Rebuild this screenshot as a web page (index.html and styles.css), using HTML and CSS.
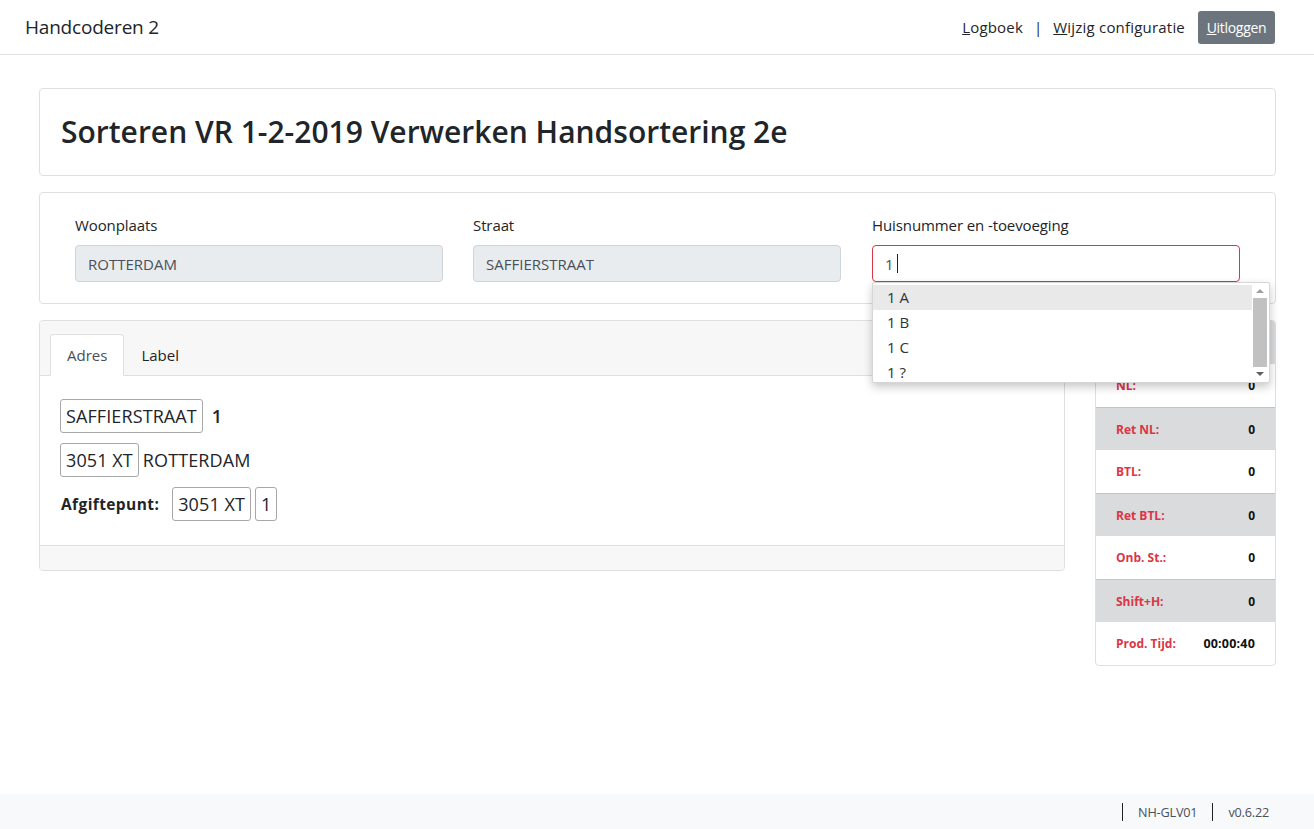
FILE: index.html
```html
<!DOCTYPE html>
<html lang="nl">
<head>
<meta charset="utf-8">
<title>Handcoderen 2</title>
<link rel="stylesheet" href="styles.css">
</head>
<body>
<div class="page">
  <header class="navbar">
    <div class="brand">Handcoderen 2</div>
    <nav class="nav-right">
      <a class="nav-link"><u>L</u>ogboek</a>
      <span class="sep">|</span>
      <a class="nav-link"><u>W</u>ijzig configuratie</a>
      <button class="btn-logout"><u>U</u>itloggen</button>
    </nav>
  </header>

  <main class="container">
    <section class="card title-card">
      <h1>Sorteren VR 1-2-2019 Verwerken Handsortering 2e</h1>
    </section>

    <section class="card form-card">
      <div class="field">
        <label>Woonplaats</label>
        <div class="input disabled">ROTTERDAM</div>
      </div>
      <div class="field">
        <label>Straat</label>
        <div class="input disabled">SAFFIERSTRAAT</div>
      </div>
      <div class="field field-house">
        <label>Huisnummer en -toevoeging</label>
        <div class="input invalid">1 <span class="caret"></span></div>
        <div class="dropdown">
          <ul class="options">
            <li class="active">1 A</li>
            <li>1 B</li>
            <li>1 C</li>
            <li>1 ?</li>
          </ul>
          <div class="scrollbar">
            <span class="arrow up"></span>
            <span class="thumb"></span>
            <span class="arrow down"></span>
          </div>
        </div>
      </div>
    </section>

    <div class="lower">
      <section class="card tabs-card">
        <div class="tabs-header">
          <div class="tab active">Adres</div>
          <div class="tab">Label</div>
        </div>
        <div class="tabs-body">
          <div class="addr-line"><span class="box">SAFFIERSTRAAT</span><span class="plain num">1</span></div>
          <div class="addr-line"><span class="box">3051 XT</span><span class="plain">ROTTERDAM</span></div>
          <div class="addr-line"><strong class="afg">Afgiftepunt:</strong><span class="box">3051 XT</span><span class="box">1</span></div>
        </div>
        <div class="tabs-footer"></div>
      </section>

      <aside class="card stats-card">
        <div class="stat-row gray head"></div>
        <div class="stat-row"><span class="lbl">NL:</span><span class="val">0</span></div>
        <div class="stat-row gray"><span class="lbl">Ret NL:</span><span class="val">0</span></div>
        <div class="stat-row"><span class="lbl">BTL:</span><span class="val">0</span></div>
        <div class="stat-row gray"><span class="lbl">Ret BTL:</span><span class="val">0</span></div>
        <div class="stat-row"><span class="lbl">Onb. St.:</span><span class="val">0</span></div>
        <div class="stat-row gray"><span class="lbl">Shift+H:</span><span class="val">0</span></div>
        <div class="stat-row"><span class="lbl">Prod. Tijd:</span><span class="val wide">00:00:40</span></div>
      </aside>
    </div>
  </main>

  <footer class="footer">
    <span class="foot-item">NH-GLV01</span>
    <span class="foot-item">v0.6.22</span>
  </footer>
</div>
</body>
</html>
```

FILE: styles.css
```css
* { box-sizing: border-box; }
html, body { margin: 0; padding: 0; }
body {
  font-family: "Open Sans", "Noto Sans", "Liberation Sans", sans-serif;
  color: #212529;
  font-size: 15px;
  background: #fff;
}
.page {
  height: 829px;
  display: flex;
  flex-direction: column;
}
.navbar {
  height: 55px;
  border-bottom: 1px solid #dee2e6;
  display: flex;
  align-items: center;
  justify-content: space-between;
  padding: 0 39px 0 25px;
}
.brand { font-size: 19px; letter-spacing: -0.2px; }
.nav-right { display: flex; align-items: center; }
.nav-link { color: #212529; font-size: 15px; letter-spacing: 0.2px; }
.sep { margin: 0 11px 0 11px; font-size: 15px; color: #212529; }
.btn-logout {
  margin-left: 13px;
  background: #6c757d;
  color: #fff;
  border: none;
  border-radius: 3px;
  height: 33px;
  width: 77px;
  font-family: inherit;
  font-size: 14px;
  letter-spacing: -0.3px;
  padding: 0;
}
.container {
  flex: 1;
  padding: 33px 38px 0 39px;
}
.card {
  border: 1px solid #dfdfdf;
  border-radius: 4px;
  background: #fff;
}
.title-card {
  height: 88px;
  display: flex;
  align-items: center;
  padding: 0 21px;
  margin-bottom: 16px;
}
.title-card h1 {
  margin: 0;
  font-size: 30px;
  font-weight: 600;
  letter-spacing: 0px;
  padding-bottom: 2px;
}
.form-card {
  height: 112px;
  display: grid;
  grid-template-columns: repeat(3, 368px);
  column-gap: 30px;
  padding: 22px 35px 0 35px;
  margin-bottom: 16px;
}
.field { position: relative; }
.field-house { left: 1px; }
.field label { display: block; font-size: 15px; margin-bottom: 10px; line-height: 20px; letter-spacing: -0.1px; }
.input {
  height: 37px;
  border: 1px solid #ced4da;
  border-radius: 4px;
  padding: 0 12px;
  display: flex;
  align-items: center;
  font-size: 15px;
  color: #495057;
}
.input.disabled { background: #e9ecef; }
.input.invalid { border-color: #dc3545; }
.caret { display: inline-block; width: 1px; height: 19px; background: #222; margin-left: 3px; }
.dropdown {
  position: absolute;
  left: 0;
  top: 67px;
  width: 398px;
  height: 101px;
  background: #fff;
  border: 1px solid #d6d6d6;
  border-radius: 2px;
  box-shadow: 0 4px 10px rgba(0,0,0,0.22);
  display: flex;
  z-index: 10;
}
.options {
  list-style: none;
  margin: 0;
  padding: 2px 0 0 0;
  flex: 1;
  overflow: hidden;
}
.options li {
  height: 25px;
  line-height: 25px;
  padding-left: 14px;
  font-size: 15px;
  color: #333;
}
.options li.active { background: #e9e9e9; }
.scrollbar {
  width: 16px;
  display: flex;
  flex-direction: column;
  align-items: center;
  margin-right: 1px;
}
.arrow { width: 0; height: 0; border-left: 4px solid transparent; border-right: 4px solid transparent; }
.arrow.up { border-bottom: 4px solid #a0a0a0; margin: 6px 0 5px; }
.arrow.down { border-top: 4px solid #606060; margin: 5px 0 6px; }
.thumb { flex: 1; width: 14px; background: #c1c1c1; }
.lower {
  display: flex;
  justify-content: space-between;
  align-items: flex-start;
}
.tabs-card {
  width: 1026px;
  overflow: hidden;
}
.tabs-header {
  background: #f7f7f7;
  border-bottom: 1px solid #dfdfdf;
  height: 55px;
  display: flex;
  align-items: flex-end;
  padding-left: 10px;
}
.tab {
  height: 42px;
  padding: 0 16px;
  display: flex;
  align-items: center;
  font-size: 15px;
  margin-bottom: -1px;
  border: 1px solid transparent;
  border-radius: 4px 4px 0 0;
}
.tab.active {
  background: #fff;
  border-color: #dfdfdf #dfdfdf #fff;
  color: #495057;
}
.tabs-body {
  height: 169px;
  padding: 23px 20px 0 20px;
}
.addr-line {
  display: flex;
  align-items: center;
  margin-bottom: 10px;
  height: 34px;
}
.box {
  border: 1px solid #a8a8a8;
  border-radius: 3px;
  height: 34px;
  padding: 0 5px;
  display: flex;
  align-items: center;
  font-size: 18px;
  margin-right: 4px;
  letter-spacing: 0.1px;
}
.plain { font-size: 18px; letter-spacing: 0.1px; }
.plain.num { margin-left: 5px; font-weight: 600; }
.afg { font-size: 15.5px; font-weight: 700; margin: 0 13px 0 1px; letter-spacing: 0.4px; }
.tabs-footer {
  height: 25px;
  background: #f7f7f7;
  border-top: 1px solid #dfdfdf;
}
.stats-card {
  width: 181px;
  overflow: hidden;
}
.stat-row {
  height: 43px;
  display: flex;
  align-items: center;
  justify-content: space-between;
  padding: 0 20px 0 20px;
  font-size: 12px;
  font-weight: 700;
}
.stat-row.gray { background: #dadbdd; border-top: 1px solid #c4c4c4; }
.stat-row.head { border-top: none; }
.lbl { color: #dc3545; }
.val { color: #111; }
.val.wide { font-size: 12.5px; letter-spacing: 0.2px; }
.footer {
  height: 35px;
  background: #f8f9fa;
  display: flex;
  justify-content: flex-end;
  align-items: center;
  padding-right: 30px;
  font-size: 12.7px;
  letter-spacing: -0.2px;
  color: #495057;
}
.foot-item {
  border-left: 1px solid #222;
  padding: 0 15px;
  line-height: 18px;
}
```
